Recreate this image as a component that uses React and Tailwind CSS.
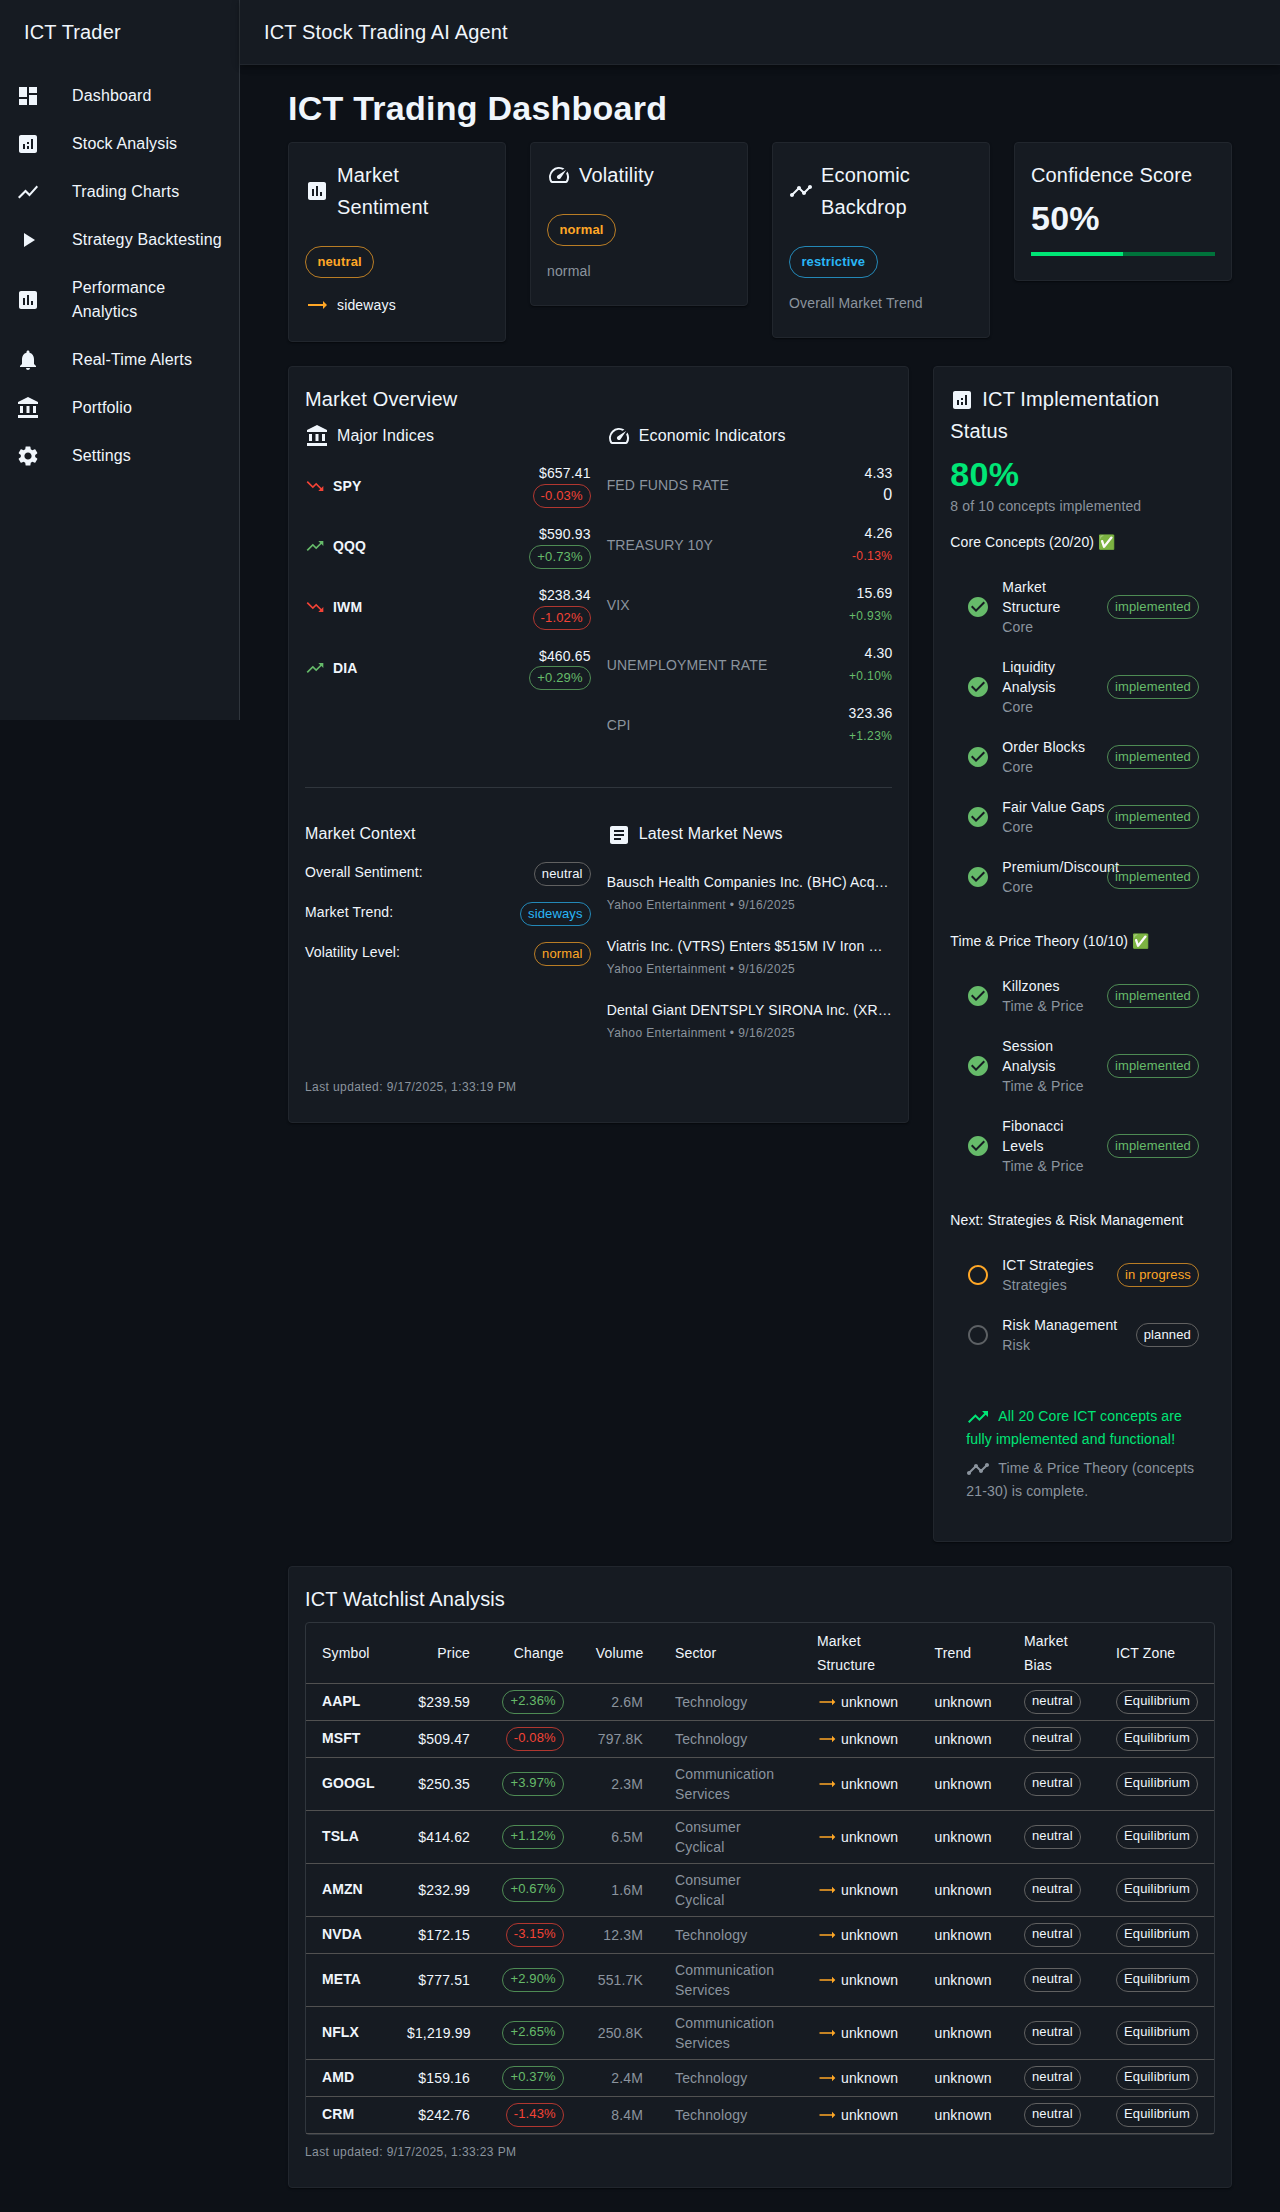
import React from "react";
import {
  MdDashboard, MdAnalytics, MdShowChart, MdPlayArrow, MdAssessment, MdNotifications,
  MdAccountBalance, MdSettings, MdSpeed, MdTimeline, MdTrendingFlat, MdTrendingUp,
  MdTrendingDown, MdArticle, MdCheckCircle, MdRadioButtonUnchecked,
} from "react-icons/md";

const h6 = "text-[20px] leading-[1.6] tracking-[0.0075em]";
const h4 = "text-[34px] leading-[1.235] tracking-[0.00735em] font-bold";
const body2 = "text-[14px] leading-[1.43] tracking-[0.01071em]";
const subtitle1 = "text-[16px] leading-[1.75] tracking-[0.00938em]";
const subtitle2 = "text-[14px] leading-[1.57] tracking-[0.00714em]";
const caption = "text-[12px] leading-[1.66] tracking-[0.03333em]";
const muted = "text-[#8b949e]";

const tones = {
  default: "text-[#f0f6fc] border-[#616161]",
  success: "text-[#66bb6a] border-[#66bb6a]/70",
  error: "text-[#f44336] border-[#f44336]/70",
  warning: "text-[#ffa726] border-[#ffa726]/70",
  info: "text-[#29b6f6] border-[#29b6f6]/70",
};

function Chip({ tone = "default", large = false, children }) {
  return (
    <span
      className={`inline-flex shrink-0 items-center justify-center whitespace-nowrap rounded-[16px] border align-middle text-[13px] ${
        large ? "h-8 px-[11.4px] font-bold" : "h-6 px-[7px]"
      } ${tones[tone]}`}
    >
      <span>{children}</span>
    </span>
  );
}

function Card({ className = "", children }) {
  return (
    <section
      className={`rounded-[4px] border border-[#21262d] bg-[#161b22] px-4 pt-4 pb-6 shadow-[0_2px_1px_-1px_rgba(0,0,0,0.2),0_1px_1px_rgba(0,0,0,0.14),0_1px_3px_rgba(0,0,0,0.12)] ${className}`}
    >
      {children}
    </section>
  );
}

const nav = [
  [MdDashboard, "Dashboard"],
  [MdAnalytics, "Stock Analysis"],
  [MdShowChart, "Trading Charts"],
  [MdPlayArrow, "Strategy Backtesting"],
  [MdAssessment, "Performance Analytics"],
  [MdNotifications, "Real-Time Alerts"],
  [MdAccountBalance, "Portfolio"],
  [MdSettings, "Settings"],
];

function Sidebar() {
  return (
    <aside className="h-[720px] w-60 shrink-0 border-r border-[#30363d] bg-[#161b22]">
      <div className="flex h-16 items-center px-6">
        <div className={h6}>ICT Trader</div>
      </div>
      <nav className="py-2">
        {nav.map(([Icon, label]) => (
          <a key={label} className="flex items-center px-4 py-2">
            <span className="flex w-14 shrink-0"><Icon size={24} /></span>
            <span className="my-1">{label}</span>
          </a>
        ))}
      </nav>
    </aside>
  );
}

function StatTitle({ icon: Icon, children }) {
  return (
    <h2 className={`flex items-center ${h6}`}>
      <Icon size={24} className="mr-2 shrink-0" />
      <span>{children}</span>
    </h2>
  );
}

function Stats() {
  return (
    <div className="grid grid-cols-4 items-start gap-6">
      <Card>
        <StatTitle icon={MdAssessment}>Market Sentiment</StatTitle>
        <div className="mt-[23px] flex"><Chip tone="warning" large>neutral</Chip></div>
        <div className="mt-[14.7px] flex items-center gap-2">
          <MdTrendingFlat size={24} className="text-[#ffa726]" />
          <span className={body2}>sideways</span>
        </div>
      </Card>
      <Card>
        <StatTitle icon={MdSpeed}>Volatility</StatTitle>
        <div className="mt-[23px] flex"><Chip tone="warning" large>normal</Chip></div>
        <p className={`mt-[14.7px] ${body2} ${muted}`}>normal</p>
      </Card>
      <Card>
        <StatTitle icon={MdTimeline}>Economic Backdrop</StatTitle>
        <div className="mt-[23px] flex"><Chip tone="info" large>restrictive</Chip></div>
        <p className={`mt-[14.7px] ${body2} ${muted}`}>Overall Market Trend</p>
      </Card>
      <Card>
        <h2 className={`mb-[7px] ${h6}`}>Confidence Score</h2>
        <p className={`mb-3 ${h4}`}>50%</p>
        <div className="h-1 bg-[#00733b]"><div className="h-1 w-1/2 bg-[#00e676]" /></div>
      </Card>
    </div>
  );
}

const indices = [
  ["SPY", "$657.41", "-0.03%"],
  ["QQQ", "$590.93", "+0.73%"],
  ["IWM", "$238.34", "-1.02%"],
  ["DIA", "$460.65", "+0.29%"],
];

const indicators = [
  ["FED FUNDS RATE", "4.33", "0"],
  ["TREASURY 10Y", "4.26", "-0.13%"],
  ["VIX", "15.69", "+0.93%"],
  ["UNEMPLOYMENT RATE", "4.30", "+0.10%"],
  ["CPI", "323.36", "+1.23%"],
];

const context = [
  ["Overall Sentiment:", "neutral", "default"],
  ["Market Trend:", "sideways", "info"],
  ["Volatility Level:", "normal", "warning"],
];

const news = [
  "Bausch Health Companies Inc. (BHC) Acq…",
  "Viatris Inc. (VTRS) Enters $515M IV Iron …",
  "Dental Giant DENTSPLY SIRONA Inc. (XR…",
];

function MarketOverview() {
  return (
    <Card>
      <h2 className={`mb-[7px] ${h6}`}>Market Overview</h2>
      <div className="grid grid-cols-2 gap-x-4">
        <div>
          <h3 className={`mb-[5.7px] ${subtitle1}`}>
            <MdAccountBalance size={24} className="mr-2 inline-block align-middle" />Major Indices
          </h3>
          {indices.map(([symbol, price, change]) => {
            const down = change.startsWith("-");
            const Trend = down ? MdTrendingDown : MdTrendingUp;
            return (
              <div key={symbol} className="flex items-center justify-between py-2">
                <div className="flex items-center gap-2">
                  <Trend size={20} className={down ? "text-[#f44336]" : "text-[#66bb6a]"} />
                  <span className={`font-bold ${body2}`}>{symbol}</span>
                </div>
                <div className="text-right">
                  <p className={body2}>{price}</p>
                  <Chip tone={down ? "error" : "success"}>{change}</Chip>
                </div>
              </div>
            );
          })}
        </div>
        <div>
          <h3 className={`mb-[5.2px] ${subtitle1}`}>
            <MdSpeed size={24} className="mr-2 inline-block align-middle" />Economic Indicators
          </h3>
          {indicators.map(([name, value, change]) => (
            <div key={name} className="flex items-center justify-between py-2">
              <p className={`${body2} ${muted}`}>{name}</p>
              <div className="text-right">
                <p className={body2}>{value}</p>
                {change === "0" ? (
                  <div>0</div>
                ) : (
                  <div>
                    <span className={`${caption} ${change.startsWith("-") ? "text-[#f44336]" : "text-[#66bb6a]"}`}>
                      {change}
                    </span>
                  </div>
                )}
              </div>
            </div>
          ))}
        </div>
      </div>
      <hr className="my-8 border-[#30363d]" />
      <div className="grid grid-cols-2 gap-x-4">
        <div>
          <h3 className={`mb-[13.7px] ${subtitle1}`}>Market Context</h3>
          {context.map(([label, value, tone]) => (
            <div key={label} className="mb-4 flex justify-between">
              <p className={body2}>{label}</p>
              <Chip tone={tone}>{value}</Chip>
            </div>
          ))}
        </div>
        <div>
          <h3 className={`mb-[6.3px] ${subtitle1}`}>
            <MdArticle size={24} className="mr-2 inline-block align-middle" />Latest Market News
          </h3>
          <ul className="py-2">
            {news.map((title) => (
              <li key={title} className="py-2.5">
                <p className={`whitespace-nowrap ${body2}`}>{title}</p>
                <div><span className={`${caption} ${muted}`}>Yahoo Entertainment • 9/16/2025</span></div>
              </li>
            ))}
          </ul>
        </div>
      </div>
      <p className={`mt-4 ${caption} ${muted}`}>Last updated: 9/17/2025, 1:33:19 PM</p>
    </Card>
  );
}

const conceptGroups = [
  {
    title: "Core Concepts (20/20) ✅",
    items: [
      ["Market Structure", "Core", "implemented"],
      ["Liquidity Analysis", "Core", "implemented"],
      ["Order Blocks", "Core", "implemented"],
      ["Fair Value Gaps", "Core", "implemented"],
      ["Premium/Discount", "Core", "implemented"],
    ],
  },
  {
    title: "Time & Price Theory (10/10) ✅",
    items: [
      ["Killzones", "Time & Price", "implemented"],
      ["Session Analysis", "Time & Price", "implemented"],
      ["Fibonacci Levels", "Time & Price", "implemented"],
    ],
  },
  {
    title: "Next: Strategies & Risk Management",
    items: [
      ["ICT Strategies", "Strategies", "in progress"],
      ["Risk Management", "Risk", "planned"],
    ],
  },
];

const statuses = {
  implemented: { icon: MdCheckCircle, color: "text-[#66bb6a]", tone: "success" },
  "in progress": { icon: MdRadioButtonUnchecked, color: "text-[#ffa726]", tone: "warning" },
  planned: { icon: MdRadioButtonUnchecked, color: "text-[#5c6064]", tone: "default" },
};

function ImplementationStatus() {
  return (
    <Card>
      <h2 className={`mb-[7.4px] ${h6}`}>
        <MdAnalytics size={24} className="mr-2 inline-block align-middle" />ICT Implementation Status
      </h2>
      <p className={`text-[#00e676] ${h4}`}>80%</p>
      <p className={`${body2} ${muted}`}>8 of 10 concepts implemented</p>
      {conceptGroups.map((group) => (
        <div key={group.title}>
          <h3 className={`mt-4 mb-[4.9px] ${subtitle2}`}>{group.title}</h3>
          <ul className="py-2">
            {group.items.map(([name, category, status]) => {
              const { icon: Icon, color, tone } = statuses[status];
              return (
                <li key={name} className="flex items-center px-4 py-1">
                  <span className={`flex w-9 shrink-0 ${color}`}><Icon size={24} /></span>
                  <div className={`my-1.5 min-w-0 flex-1 ${body2}`}>
                    <p>{name}</p>
                    <p className={muted}>{category}</p>
                  </div>
                  <Chip tone={tone}>{status}</Chip>
                </li>
              );
            })}
          </ul>
        </div>
      ))}
      <div className="mt-[15.6px] p-4">
        <p className={`text-[#00e676] ${body2}`}>
          <MdTrendingUp size={24} className="mr-2 inline-block align-middle" />All 20 Core ICT concepts are fully
          implemented and functional!
        </p>
        <p className={`mt-2 ${body2} ${muted}`}>
          <MdTimeline size={24} className="mr-2 inline-block align-middle" />Time &amp; Price Theory (concepts 21-30)
          is complete.
        </p>
      </div>
    </Card>
  );
}

const watchlist = [
  ["AAPL", "$239.59", "+2.36%", "2.6M", "Technology"],
  ["MSFT", "$509.47", "-0.08%", "797.8K", "Technology"],
  ["GOOGL", "$250.35", "+3.97%", "2.3M", "Communication Services"],
  ["TSLA", "$414.62", "+1.12%", "6.5M", "Consumer Cyclical"],
  ["AMZN", "$232.99", "+0.67%", "1.6M", "Consumer Cyclical"],
  ["NVDA", "$172.15", "-3.15%", "12.3M", "Technology"],
  ["META", "$777.51", "+2.90%", "551.7K", "Communication Services"],
  ["NFLX", "$1,219.99", "+2.65%", "250.8K", "Communication Services"],
  ["AMD", "$159.16", "+0.37%", "2.4M", "Technology"],
  ["CRM", "$242.76", "-1.43%", "8.4M", "Technology"],
];

const columns = [
  ["Symbol", "text-left", "w-[85px]"],
  ["Price", "text-right", "w-[95px]"],
  ["Change", "text-right", "w-[93.8px]"],
  ["Volume", "text-right", "w-[79.2px]"],
  ["Sector", "text-left", "w-[142px]"],
  ["Market Structure", "text-left", "w-[117.5px]"],
  ["Trend", "text-left", "w-[89.5px]"],
  ["Market Bias", "text-left", "w-[92px]"],
  ["ICT Zone", "text-left", ""],
];

const cell = "border-b border-[#515151] px-4 py-[6px] align-middle";

function Watchlist() {
  return (
    <Card>
      <h2 className={`mb-[7px] ${h6}`}>ICT Watchlist Analysis</h2>
      <div className="rounded-[4px] border border-[#30363d]">
        <table className="w-full table-fixed border-separate border-spacing-0">
          <thead>
            <tr>
              {columns.map(([label, align, width]) => (
                <th key={label} className={`${cell} ${align} ${width} text-[14px] leading-6 font-normal tracking-[0.01071em]`}>
                  {label}
                </th>
              ))}
            </tr>
          </thead>
          <tbody className={body2}>
            {watchlist.map(([symbol, price, change, volume, sector]) => (
              <tr key={symbol}>
                <td className={cell}><p className={`font-bold ${subtitle2}`}>{symbol}</p></td>
                <td className={`${cell} text-right`}>{price}</td>
                <td className={`${cell} text-right`}>
                  <Chip tone={change.startsWith("-") ? "error" : "success"}>{change}</Chip>
                </td>
                <td className={`${cell} text-right ${muted}`}>{volume}</td>
                <td className={`${cell} ${muted}`}>{sector}</td>
                <td className={cell}>
                  <div className="flex items-center gap-1">
                    <MdTrendingFlat size={20} className="shrink-0 text-[#ffa726]" />
                    <span>unknown</span>
                  </div>
                </td>
                <td className={cell}>unknown</td>
                <td className={cell}><Chip>neutral</Chip></td>
                <td className={cell}><Chip>Equilibrium</Chip></td>
              </tr>
            ))}
          </tbody>
        </table>
      </div>
      <p className={`mt-2 ${caption} ${muted}`}>Last updated: 9/17/2025, 1:33:23 PM</p>
    </Card>
  );
}

export default function App() {
  return (
    <div className="flex min-h-[2212px] items-start bg-[#0d1117] font-['Liberation_Sans',Arial,sans-serif] text-[16px] leading-6 tracking-[0.00938em] text-[#f0f6fc]">
      <Sidebar />
      <div className="min-w-0 flex-1">
        <header className="flex h-[65px] items-center border-b border-[#21262d] bg-[#161b22] px-6 shadow-[0_2px_4px_-1px_rgba(0,0,0,0.2),0_4px_5px_rgba(0,0,0,0.14),0_1px_10px_rgba(0,0,0,0.12)]">
          <div className={h6}>ICT Stock Trading AI Agent</div>
        </header>
        <main className="px-12 pt-[23px] pb-6">
          <h1 className={`mb-[11.9px] ${h4}`}>ICT Trading Dashboard</h1>
          <Stats />
          <div className="mt-6 grid grid-cols-[minmax(0,621.33px)_minmax(0,1fr)] items-start gap-6">
            <MarketOverview />
            <ImplementationStatus />
          </div>
          <div className="mt-6">
            <Watchlist />
          </div>
        </main>
      </div>
    </div>
  );
}
